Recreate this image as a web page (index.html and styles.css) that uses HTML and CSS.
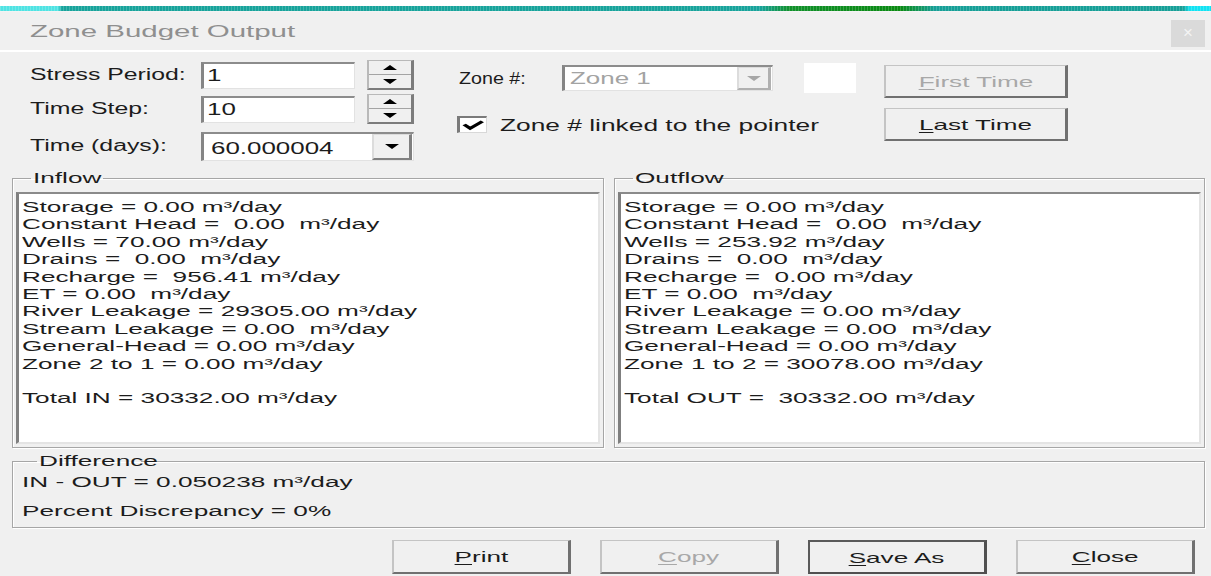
FILE: index.html
```html
<!DOCTYPE html>
<html lang="en">
<head>
<meta charset="utf-8">
<title>Zone Budget Output</title>
<link rel="stylesheet" href="styles.css">
</head>
<body>
<div class="strip"><div class="band"></div></div>

<header class="titlebar">
  <span class="t title-text">Zone Budget Output</span>
  <span class="close">×</span>
</header>

<main class="dialog">
  <section class="top">
    <div class="time-grid">
      <span class="lbl"><span class="t">Stress Period:</span></span>
      <div class="field"><span class="t">1</span></div>
      <div class="spin">
        <span class="spin-half"><i class="tri-up"></i></span>
        <span class="spin-half lower"><i class="tri-down"></i></span>
      </div>

      <span class="lbl"><span class="t">Time Step:</span></span>
      <div class="field"><span class="t">10</span></div>
      <div class="spin">
        <span class="spin-half"><i class="tri-up"></i></span>
        <span class="spin-half lower"><i class="tri-down"></i></span>
      </div>

      <span class="lbl row3"><span class="t">Time (days):</span></span>
      <div class="combo combo-time">
        <span class="t">60.000004</span>
        <span class="drop"><i class="tri-down"></i></span>
      </div>
    </div>

    <div class="zone-col">
      <div class="zone-row">
        <span class="zone-lbl"><span class="t">Zone #:</span></span>
        <div class="combo combo-zone">
          <span class="t">Zone 1</span>
          <span class="drop"><i class="tri-down grey"></i></span>
        </div>
        <div class="swatch"></div>
      </div>
      <div class="check-row">
        <span class="checkbox">
          <svg viewBox="0 0 10 10" preserveAspectRatio="none"><polyline points="1.6,4.6 3.9,7.4 8.6,2.4" fill="none" stroke="#000" stroke-width="1.7"/></svg>
        </span>
        <span class="check-lbl"><span class="t">Zone # linked to the pointer</span></span>
      </div>
    </div>

    <div class="nav-col">
      <button class="btn nav disabled"><span class="t"><u>F</u>irst Time</span></button>
      <button class="btn nav"><span class="t"><u>L</u>ast Time</span></button>
    </div>
  </section>

  <section class="flows">
    <fieldset class="group">
      <legend class="lg-in"><span class="t">Inflow</span></legend>
      <div class="listing"><div class="lines">Storage = 0.00 m³/day
Constant Head =  0.00  m³/day
Wells = 70.00 m³/day
Drains =  0.00  m³/day
Recharge =  956.41 m³/day
ET = 0.00  m³/day
River Leakage = 29305.00 m³/day
Stream Leakage = 0.00  m³/day
General-Head = 0.00 m³/day
Zone 2 to 1 = 0.00 m³/day

Total IN = 30332.00 m³/day</div></div>
    </fieldset>
    <fieldset class="group">
      <legend class="lg-out"><span class="t">Outflow</span></legend>
      <div class="listing"><div class="lines">Storage = 0.00 m³/day
Constant Head =  0.00  m³/day
Wells = 253.92 m³/day
Drains =  0.00  m³/day
Recharge =  0.00 m³/day
ET = 0.00  m³/day
River Leakage = 0.00 m³/day
Stream Leakage = 0.00  m³/day
General-Head = 0.00 m³/day
Zone 1 to 2 = 30078.00 m³/day

Total OUT =  30332.00 m³/day</div></div>
    </fieldset>
  </section>

  <fieldset class="group diff">
    <legend class="lg-diff"><span class="t">Difference</span></legend>
    <div class="diff-line first"><span class="t">IN - OUT = 0.050238 m³/day</span></div>
    <div class="diff-line"><span class="t">Percent Discrepancy = 0%</span></div>
  </fieldset>

  <footer class="actions">
    <button class="btn"><span class="t"><u>P</u>rint</span></button>
    <button class="btn disabled"><span class="t"><u>C</u>opy</span></button>
    <button class="btn default"><span class="t"><u>S</u>ave As</span></button>
    <button class="btn"><span class="t"><u>C</u>lose</span></button>
  </footer>
</main>
</body>
</html>
```

FILE: styles.css
```css
* { box-sizing: border-box; }

html, body {
  margin: 0;
  height: 100%;
  overflow: hidden;
}

body {
  background: #f0f0f0;
  font-family: "Liberation Sans", Arial, sans-serif;
  color: #1c1c1c;
}

/* wide, classic dialog lettering */
.t {
  display: inline-block;
  white-space: pre;
  transform-origin: 0 50%;
  transform: scaleX(var(--sx, 1.8));
}

/* desktop edge peeking above the window */
.strip {
  height: 12px;
  background: #ffffff;
  padding-top: 6px;
  border-bottom: 1px solid #f3f3f3;
}
.band {
  height: 5px;
  background:
    repeating-linear-gradient(90deg, rgba(255,255,255,0.18) 0 1px, transparent 1px 3px),
    linear-gradient(90deg,
      #4fe3e3 0, #4fe3e3 58px,
      #17a39b 62px, #17a39b 760px,
      #10902a 790px, #0a8a12 900px,
      #169f97 935px, #169f97 1183px,
      #11e3f3 1190px, #11e3f3 100%);
}

/* window caption */
.titlebar {
  height: 40px;
  display: flex;
  align-items: center;
  justify-content: space-between;
  padding: 0 6px 0 30px;
  border-bottom: 2px solid #ffffff;
  background: #f0f0f0;
}
.title-text {
  --sx: 1.84;
  font-size: 16px;
  color: #8f8f8f;
  margin-top: 2px;
}
.close {
  width: 34px;
  height: 27px;
  margin-top: 4px;
  background: #dadada;
  color: #f4f4f4;
  font-size: 17px;
  display: flex;
  align-items: center;
  justify-content: center;
}

.dialog {
  padding: 0 6px 0 12px;
}

/* ---------- top controls ---------- */
.top {
  display: flex;
  align-items: flex-start;
  padding: 8px 0 0 18px;
  height: 118px;
}

.time-grid {
  display: grid;
  grid-template-columns: 171px 154px 12px 47px;
  grid-template-rows: 30px 30px 33px;
  row-gap: 4px;
  align-items: center;
}

.lbl {
  font-size: 16px;
}
.lbl .t { --sx: 1.55; }
.lbl.row3 { align-self: end; padding-bottom: 6px; }

.field {
  grid-column: 2;
  height: 27px;
  background: #ffffff;
  border-left: 3px solid #858585;
  border-top: 2px solid #8c8c8c;
  border-right: 1px solid #e2e2e2;
  border-bottom: 1px solid #e2e2e2;
  padding-left: 3px;
  display: flex;
  align-items: center;
  font-size: 16px;
}
.field .t, .combo .t { --sx: 1.62; }

.spin {
  grid-column: 4;
  height: 30px;
  display: flex;
  flex-direction: column;
  background: #f0f0f0;
  border-top: 1px solid #b9b9b9;
  border-left: 2px solid #b9b9b9;
  border-right: 3px solid #7c7c7c;
  border-bottom: 2px solid #7c7c7c;
}
.spin-half {
  flex: 1;
  display: flex;
  align-items: center;
  justify-content: center;
}
.spin-half.lower {
  border-top: 1px solid #a4a4a4;
}

.tri-up, .tri-down {
  display: block;
  width: 0;
  height: 0;
  border-left: 7px solid transparent;
  border-right: 7px solid transparent;
}
.tri-up { border-bottom: 5px solid #000; }
.tri-down { border-top: 5px solid #000; }
.tri-down.grey { border-top-color: #a6a6a6; }

.combo {
  height: 29px;
  background: #ffffff;
  border-left: 3px solid #858585;
  border-top: 2px solid #8c8c8c;
  border-right: 1px solid #e2e2e2;
  border-bottom: 1px solid #e2e2e2;
  display: flex;
  align-items: center;
  justify-content: space-between;
  font-size: 16px;
}
.combo-time {
  grid-column: 2 / 5;
  align-self: end;
  padding-left: 7px;
}
.combo-time .t { margin-top: 4px; }
.drop {
  width: 40px;
  height: 100%;
  margin-right: 1px;
  display: flex;
  align-items: center;
  justify-content: center;
  background: #f0f0f0;
  border-top: 1px solid #dcdcdc;
  border-left: 2px solid #dcdcdc;
  border-right: 3px solid #808080;
  border-bottom: 2px solid #808080;
}

.zone-col {
  margin-left: 43px;
  display: flex;
  flex-direction: column;
}
.zone-row {
  display: flex;
  align-items: center;
  height: 30px;
  margin-top: 3px;
}
.zone-lbl {
  width: 105px;
  padding-left: 2px;
  font-size: 16px;
  margin-top: 2px;
}
.zone-lbl .t { --sx: 1.23; }
.combo-zone {
  width: 211px;
  height: 26px;
  padding-left: 5px;
  color: #a3a3a3;
}
.combo-zone .drop {
  width: 34px;
  border-right-color: #b0b0b0;
  border-bottom-color: #b0b0b0;
}
.swatch {
  width: 52px;
  height: 30px;
  margin-left: 31px;
  background: #ffffff;
}

.check-row {
  display: flex;
  align-items: center;
  margin-top: 23px;
  height: 17px;
}
.checkbox {
  width: 30px;
  height: 17px;
  background: #ffffff;
  border-left: 3px solid #7a7a7a;
  border-top: 2px solid #7a7a7a;
  border-right: 1px solid #d8d8d8;
  border-bottom: 1px solid #d8d8d8;
  display: flex;
}
.checkbox svg {
  width: 100%;
  height: 100%;
}
.check-lbl {
  margin-left: 13px;
  font-size: 16px;
  margin-top: 2px;
}
.check-lbl .t { --sx: 1.645; }

.nav-col {
  margin-left: 28px;
  display: flex;
  flex-direction: column;
  gap: 10px;
  padding-top: 5px;
}

/* ---------- push buttons ---------- */
.btn {
  font-family: inherit;
  font-size: 15px;
  color: #1c1c1c;
  width: 179px;
  height: 34px;
  padding: 0;
  background: #f0f0f0;
  border-top: 1px solid #c4c4c4;
  border-left: 2px solid #c4c4c4;
  border-right: 3px solid #707070;
  border-bottom: 2px solid #707070;
  display: flex;
  align-items: center;
  justify-content: center;
}
.btn .t {
  --sx: 1.74;
  transform-origin: 50% 50%;
}
.btn u { text-decoration-thickness: 1px; text-underline-offset: 2px; }
.btn.nav {
  width: 184px;
  height: 33px;
}
.btn.disabled { color: #a8a8a8; }
.btn.default {
  border-top: 2px solid #5a5a5a;
  border-left: 2px solid #5a5a5a;
  border-right: 3px solid #505050;
  border-bottom: 2px solid #505050;
}

/* ---------- group boxes ---------- */
.group {
  margin: 0;
  min-width: 0;
  padding: 6px 3px 3px 3px;
  border: 1px solid #a6a6a6;
  box-shadow: inset 1px 1px 0 #ffffff, 1px 1px 0 #ffffff;
}
.group legend {
  margin-left: 15px;
  padding: 0 2px;
  font-size: 14px;
  line-height: 16px;
  height: 16px;
}
.group .t { --sx: 1.87; }
.lg-in { width: 72px; }
.lg-out { width: 81px; }
.lg-diff { width: 104px; }

.flows {
  display: flex;
  gap: 10px;
}
.flows .group { flex: 1; }

.listing {
  height: 252px;
  background: #ffffff;
  border-left: 3px solid #7f7f7f;
  border-top: 2px solid #8a8a8a;
  border-right: 2px solid #e4e4e4;
  border-bottom: 2px solid #e4e4e4;
  padding: 5px 0 0 3px;
  overflow: hidden;
}
.lines {
  font-size: 14px;
  line-height: 17.4px;
  white-space: pre;
  transform-origin: 0 0;
  transform: scaleX(1.87);
}

.diff {
  margin-top: 5px;
  padding: 0 9px 6px 9px;
}
.diff-line {
  height: 20px;
  display: flex;
  align-items: center;
  font-size: 14px;
}
.diff-line.first { margin-top: 3px; }
.diff-line + .diff-line { margin-top: 9px; }

/* ---------- dialog buttons ---------- */
.actions {
  display: flex;
  justify-content: flex-end;
  gap: 29px;
  margin-top: 12px;
  padding-right: 10px;
}
```
